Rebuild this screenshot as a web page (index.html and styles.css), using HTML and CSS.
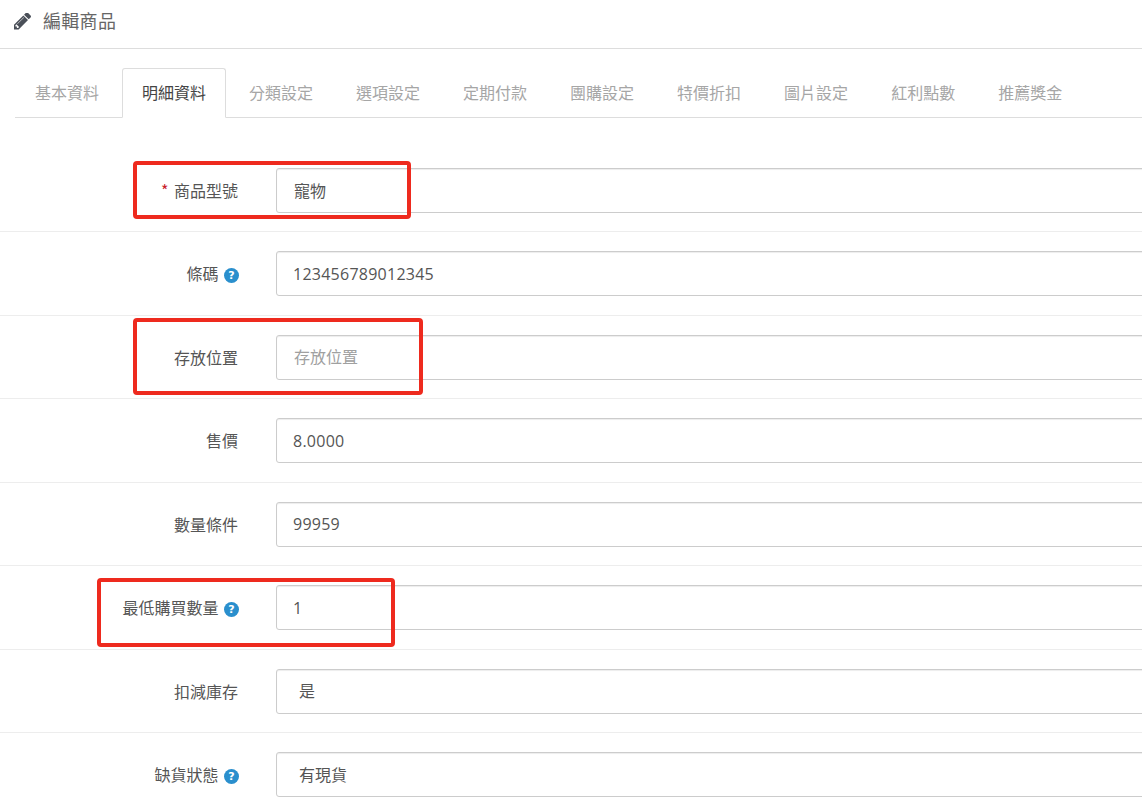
FILE: index.html
```html
<!DOCTYPE html>
<html lang="zh-Hant">
<head>
<meta charset="utf-8">
<title>編輯商品</title>
<link rel="stylesheet" href="styles.css">
</head>
<body>
<div class="page">
  <header class="head">
    <svg class="pencil" viewBox="128 256 1515 1408" aria-hidden="true"><path d="M491 1536l91-91-235-235-91 91v107h128v128h107zm523-928q0-22-22-22-10 0-17 7l-542 542q-7 7-7 17 0 22 22 22 10 0 17-7l542-542q7-7 7-17zm-54-192l416 416-832 832h-416v-416zm683 96q0 53-37 90l-166 166-416-416 166-165q36-38 90-38 53 0 91 38l235 234q37 39 37 91z"/></svg>
    <h1 class="title">編輯商品</h1>
  </header>
  <nav class="tabs">
    <a class="tab">基本資料</a>
    <a class="tab active">明細資料</a>
    <a class="tab">分類設定</a>
    <a class="tab">選項設定</a>
    <a class="tab">定期付款</a>
    <a class="tab">團購設定</a>
    <a class="tab">特價折扣</a>
    <a class="tab">圖片設定</a>
    <a class="tab">紅利點數</a>
    <a class="tab">推薦獎金</a>
  </nav>
  <form class="form">
    <div class="row">
      <label class="label"><span class="req">*</span> 商品型號</label>
      <input class="control cjk" value="寵物">
    </div>
    <div class="row">
      <label class="label">條碼 <span class="help">?</span></label>
      <input class="control" value="123456789012345">
    </div>
    <div class="row">
      <label class="label">存放位置</label>
      <input class="control cjk" placeholder="存放位置">
    </div>
    <div class="row">
      <label class="label">售價</label>
      <input class="control" value="8.0000">
    </div>
    <div class="row">
      <label class="label">數量條件</label>
      <input class="control" value="99959">
    </div>
    <div class="row">
      <label class="label">最低購買數量 <span class="help">?</span></label>
      <input class="control" value="1">
    </div>
    <div class="row">
      <label class="label">扣減庫存</label>
      <select class="control pick"><option>是</option></select>
    </div>
    <div class="row">
      <label class="label">缺貨狀態 <span class="help">?</span></label>
      <select class="control pick"><option>有現貨</option></select>
    </div>
  </form>
  <div class="mark mark-a"></div>
  <div class="mark mark-b"></div>
  <div class="mark mark-c"></div>
</div>
</body>
</html>
```
FILE: styles.css
```css
* { box-sizing: border-box; }
html, body { margin: 0; padding: 0; background: #fff; height: 100%; overflow: hidden; }
body { font-family: "Open Sans", "Noto Sans CJK TC", sans-serif; color: #555; }
.page { position: relative; height: 805px; overflow: hidden; }

.head { height: 49px; display: flex; align-items: flex-start; gap: 12px; padding: 13px 0 0 14px; border-bottom: 1px solid #ddd; }
.pencil { width: 17px; height: 17px; fill: #4a4f58; flex: none; }
.title { margin: -2px 0 0; font: 400 18px/18px "Noto Sans CJK TC", sans-serif; letter-spacing: .3px; color: #666; }

.tabs { display: flex; gap: 3px; margin: 19px 0 0 15px; height: 50px; border-bottom: 1px solid #ddd; font-family: "Noto Sans CJK TC", sans-serif; font-size: 16px; }
.tab { height: 50px; padding: 0 19px; line-height: 46px; border: 1px solid transparent; border-radius: 3px 3px 0 0; color: #a6a6a6; }
.tab.active { color: #444; background: #fff; border-color: #ddd #ddd #fff; }

.form { padding-top: 30.5px; }
.row { height: 83.5px; padding-top: 19.25px; display: flex; align-items: flex-start; gap: 38px; border-bottom: 1px solid #ededed; }
.label { width: 238px; flex: none; height: 45px; line-height: 44px; text-align: right; font-family: "Noto Sans CJK TC", sans-serif; font-size: 16px; color: #555; }
.req { color: #c8202b; margin-right: 2px; }
.help { display: inline-block; width: 15px; height: 15px; margin-left: 2px; margin-right: -1px; border-radius: 50%; background: #2a8fcd; color: #fff; font: 700 11px/15px "DejaVu Sans", sans-serif; text-align: center; vertical-align: 1px; }
.control { flex: 1; min-width: 0; height: 45px; margin-right: -12px; padding: 0 16px; border: 1px solid #ccc; border-radius: 3px; background: #fff; box-shadow: inset 0 1px 1px rgba(0,0,0,.075); font-family: "Open Sans", "Noto Sans CJK TC", sans-serif; font-size: 16px; letter-spacing: .25px; color: #555; outline: 0; }
.cjk { padding-left: 17px; letter-spacing: 0; }
.control::placeholder { color: #a0a0a0; font-family: "Noto Sans CJK TC", sans-serif; opacity: 1; }
.pick { appearance: none; -webkit-appearance: none; padding-left: 22px; letter-spacing: 0; }

.mark { position: absolute; border: 4px solid #ee2a1e; border-radius: 4px; pointer-events: none; }
.mark-a { left: 133px; top: 161px; width: 278px; height: 58px; }
.mark-b { left: 133px; top: 318px; width: 290px; height: 77px; }
.mark-c { left: 97px; top: 578px; width: 298px; height: 69px; }
```
